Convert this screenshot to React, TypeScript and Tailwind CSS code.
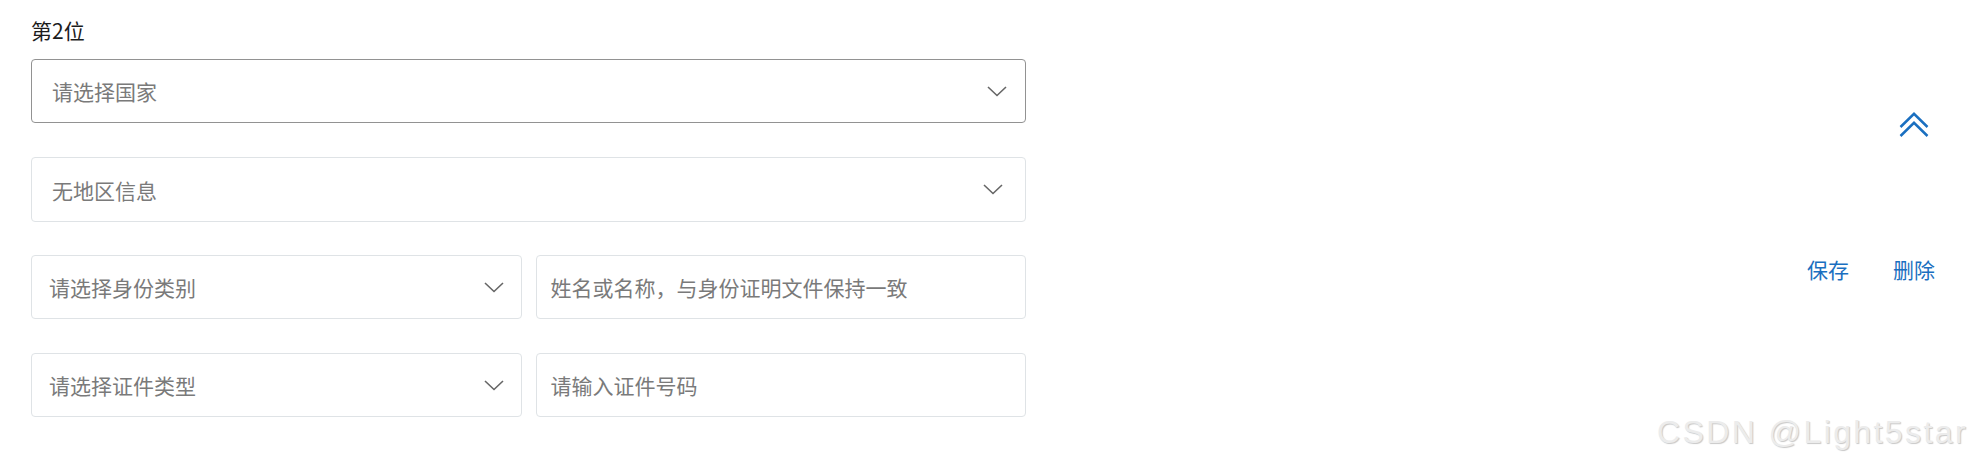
function Chevron() {
  return (
    <svg width="20" height="11" viewBox="0 0 20 11" fill="none">
      <polyline points="1,1 10,9.5 19,1" stroke="#666" strokeWidth="1.6" />
    </svg>
  );
}

function DoubleUp() {
  return (
    <svg width="30" height="26" viewBox="0 0 30 26" fill="none">
      <polyline points="1.5,15 15,1.8 28.5,15" stroke="#1a6fc0" strokeWidth="2.5" />
      <polyline points="1.5,24 15,10.8 28.5,24" stroke="#1a6fc0" strokeWidth="2.5" />
    </svg>
  );
}

function Select({ text, pl, pr, active }: { text: string; pl: string; pr: string; active?: boolean }) {
  return (
    <div
      className={`flex h-full items-center justify-between rounded-[4px] border bg-white ${pl} ${pr} ${
        active ? "border-[#929292]" : "border-[#dfe3e6]"
      }`}
    >
      <span className="text-[21px] leading-[24px] text-[#7a7a7a]">{text}</span>
      <Chevron />
    </div>
  );
}

function Input({ text }: { text: string }) {
  return (
    <div className="flex h-full items-center rounded-[4px] border border-[#dfe3e6] bg-white pl-[14px]">
      <span className="text-[21px] leading-[24px] text-[#7a7a7a]">{text}</span>
    </div>
  );
}

export default function App() {
  return (
    <div className="relative h-[467px] w-[1974px] overflow-hidden bg-white font-['Noto_Sans_CJK_SC','Microsoft_YaHei',sans-serif]">
      <div className="flex justify-between pl-[31px] pr-[39px]">
        <div className="w-[995px] pt-[19px]">
          <div className="h-[22px] text-[21px] leading-[22px] text-[#1c1c1c]">第2位</div>
          <div className="mt-[18px] h-[64px]">
            <Select text="请选择国家" pl="pl-[20px]" pr="pr-[18px]" active />
          </div>
          <div className="mt-[34px] h-[65px]">
            <Select text="无地区信息" pl="pl-[20px]" pr="pr-[22px]" />
          </div>
          <div className="mt-[33px] grid h-[64px] grid-cols-2 gap-[14px]">
            <Select text="请选择身份类别" pl="pl-[17px]" pr="pr-[17px]" />
            <Input text="姓名或名称，与身份证明文件保持一致" />
          </div>
          <div className="mt-[34px] grid h-[64px] grid-cols-2 gap-[14px]">
            <Select text="请选择证件类型" pl="pl-[17px]" pr="pr-[17px]" />
            <Input text="请输入证件号码" />
          </div>
        </div>

        <div className="flex flex-col items-end pt-[112px]">
          <div className="mr-[6px]">
            <DoubleUp />
          </div>
          <div className="mt-[120px] flex gap-[44px] text-[21px] leading-[22px] text-[#1a6fc0]">
            <button className="cursor-pointer">保存</button>
            <button className="cursor-pointer">删除</button>
          </div>
        </div>
      </div>

      <div className="absolute left-[1657px] top-[412px] whitespace-nowrap font-['Liberation_Sans',Arial,sans-serif] text-[32px] leading-[40px] tracking-[2.4px] text-[#ececec] [text-shadow:1px_1px_1px_rgba(0,0,0,0.22)]">
        CSDN @Light5star
      </div>
    </div>
  );
}
